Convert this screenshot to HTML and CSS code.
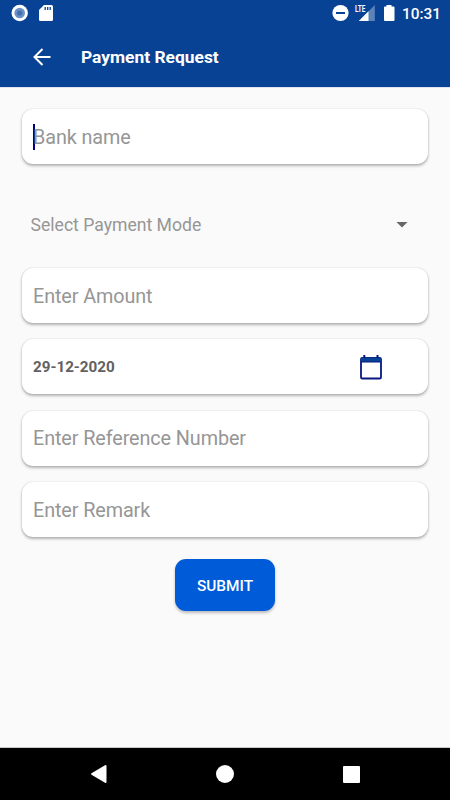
FILE: index.html
```html
<!DOCTYPE html>
<html lang="en">
<head>
<meta charset="utf-8">
<title>Payment Request</title>
<link rel="stylesheet" href="styles.css">
</head>
<body>
<div class="screen">
  <header class="header">
    <div class="status">
      <svg class="status-left" width="60" height="28" viewBox="0 0 60 28">
        <circle cx="19.700" cy="13" r="8.200" fill="#fff"/>
        <circle cx="19.700" cy="13" r="5.300" fill="#6b90c6"/>
        <circle cx="19.700" cy="13" r="2.600" fill="#416faf"/>
        <path fill="#fff" d="M44 5h7.500q1.500 0 1.500 1.500v13q0 1.500-1.500 1.500h-11q-1.500 0-1.500-1.500V10z"/>
        <path stroke="#084294" stroke-width="1.300" d="M45.200 7v3M47.700 7v3M50.200 7v3"/>
      </svg>
      <svg class="status-icons" width="66" height="28" viewBox="330 0 66 28">
        <circle cx="340.500" cy="13" r="8.100" fill="#fff"/>
        <path fill="#084294" d="M336 12h9v2h-9z"/>
        <path fill="#5b82b9" d="M374.800 5v16h-16z"/>
        <path fill="#fff" d="M368.500 11.300V21h-9.700z"/>
        <path fill="#084294" d="M354 4h12.500v9H354z"/>
        <text class="lte" x="355" y="12" textLength="10.500" lengthAdjust="spacingAndGlyphs">LTE</text>
        <path fill="#fff" d="M386.500 5h5v1.500h2q1 0 1 1V20q0 1-1 1h-8.500q-1 0-1-1V7.500q0-1 1-1h1.500z"/>
      </svg>
      <span class="time">10:31</span>
    </div>
    <div class="toolbar">
      <svg class="back" width="20" height="20" viewBox="0 0 20 20"><path fill="none" stroke="#fff" stroke-width="2" d="M18.500 10H3M10.500 2L2.500 10l8 8"/></svg>
      <h1 class="title">Payment Request</h1>
    </div>
  </header>
  <main class="form">
    <div class="field"><span class="caret"></span><span class="hint">Bank name</span></div>
    <div class="select">
      <span>Select Payment Mode</span>
      <svg width="12" height="6" viewBox="0 0 12 6"><path fill="#666" d="M.5 0h11L6 5.500z"/></svg>
    </div>
    <div class="stack">
      <div class="field"><span class="hint">Enter Amount</span></div>
      <div class="field date">
        <span>29-12-2020</span>
        <svg width="24" height="26" viewBox="0 0 24 26">
          <rect x="2" y="4" width="20" height="20.500" rx="1.300" fill="none" stroke="#07177f" stroke-width="1.800"/>
          <path fill="#084294" d="M2 3.500h20V8H2z"/>
          <path fill="#07177f" d="M4.300 1h2v3h-2zM17.500 1h2v3h-2zM2 7.500h20v1H2z"/>
        </svg>
      </div>
      <div class="field"><span class="hint">Enter Reference Number</span></div>
      <div class="field"><span class="hint">Enter Remark</span></div>
    </div>
    <button class="submit">SUBMIT</button>
  </main>
  <nav class="nav">
    <svg width="18" height="20" viewBox="0 0 18 20"><path fill="#fff" d="M1.500 9.300L15 1.200q1.500-.7 1.500.8v16q0 1.500-1.500.8L1.500 10.700q-1-.7 0-1.400z"/></svg>
    <svg class="home" width="18" height="18" viewBox="0 0 18 18"><circle cx="9" cy="9" r="9" fill="#fff"/></svg>
    <svg width="17" height="17" viewBox="0 0 17 17"><rect width="17" height="17" rx="1" fill="#fff"/></svg>
  </nav>
</div>
</body>
</html>
```

FILE: styles.css
```css
* { box-sizing: border-box; }
body { margin: 0; font-family: Roboto, "Liberation Sans", sans-serif; }
.screen { width: 450px; height: 800px; display: flex; flex-direction: column; background: #fafafa; overflow: hidden; }
.header { height: 87px; background: #084294; color: #fff; box-shadow: 0 1px 0 #dfe3f2; }
.status { height: 28px; display: flex; align-items: center; padding-right: 9px; }
.status svg { display: block; }
.status-icons { margin-left: auto; }
.lte { font: 700 9px Roboto, sans-serif; fill: #fff; }
.time { margin-left: 6px; font-size: 15.4px; font-weight: 500; line-height: 28px; width: 39px; white-space: nowrap; }
.toolbar { height: 59px; display: flex; align-items: center; padding: 0 0 1px 32px; }
.back { display: block; width: 20px; margin-bottom: 1px; }
.title { margin: 0 0 0 29px; font-size: 17.4px; font-weight: 700; line-height: 24px; }
.form { flex: 1; padding: 22px 22px 0; display: flex; flex-direction: column; }
.field { height: 55px; flex: none; display: flex; align-items: center; padding: 1px 11px 0; border-radius: 11px; background: #fff; box-shadow: 0 2px 3px rgba(0,0,0,.28), 0 0 1.5px rgba(0,0,0,.2); }
.hint { font-size: 19.8px; letter-spacing: -.09px; color: #969696; white-space: nowrap; }
.caret { width: 2px; height: 26px; margin-right: -2px; background: #000080; }
.select { height: 104px; flex: none; display: flex; align-items: center; justify-content: space-between; padding: 18px 20px 0 8.5px; font-size: 17.6px; color: #969696; }
.stack { display: flex; flex-direction: column; gap: 16.35px; }
.date { justify-content: space-between; padding: 0 45px 0 11px; font-size: 15.2px; font-weight: 700; color: #616161; }
.submit { align-self: center; width: 100px; height: 52px; margin-top: 22px; padding: 2px 0 0; border: 0; border-radius: 11px; background: #005bd9; color: #fff; font: 500 15.4px Roboto, sans-serif; box-shadow: 0 2px 3px rgba(0,0,0,.25); }
.nav { height: 52px; background: #000; display: flex; align-items: center; justify-content: space-between; padding: 0 90px; box-shadow: 0 -1px 0 #c8c8c8; }
.home { margin-right: 2px; }
```
